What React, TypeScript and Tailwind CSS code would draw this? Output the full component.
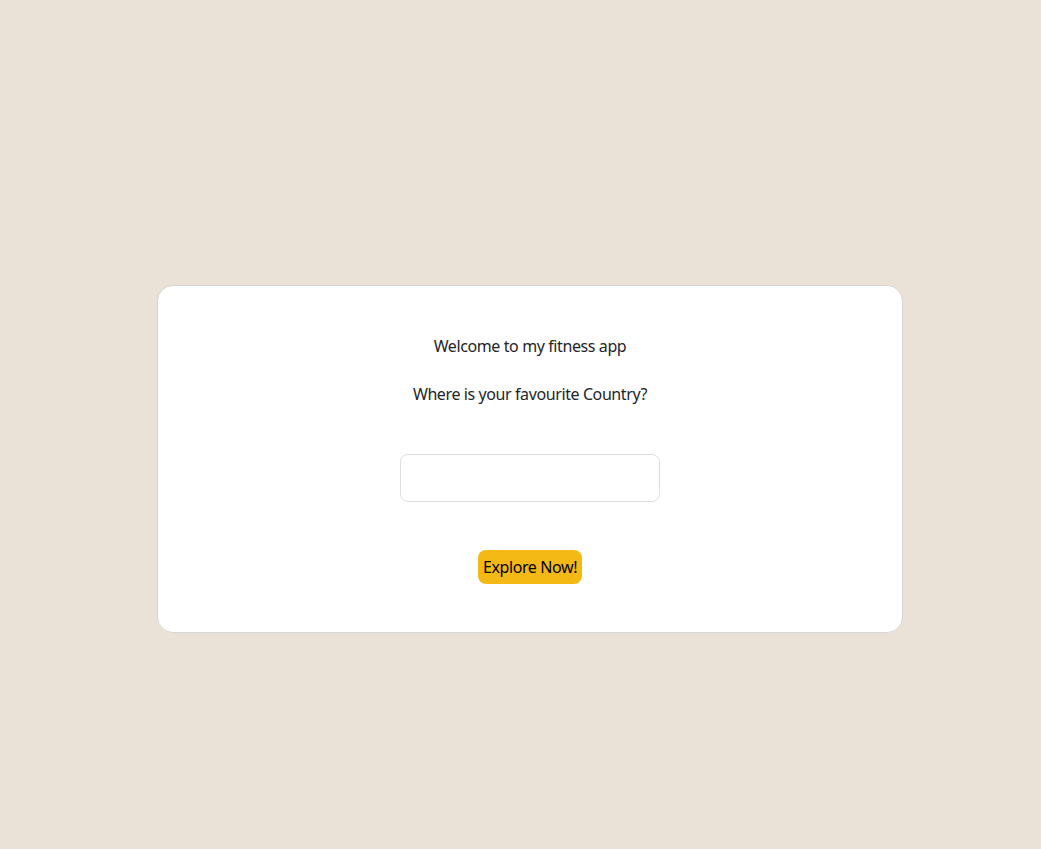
import React from "react"

export default function App() {
    const [country, setCountry] = React.useState("")

    return (
        <div className="min-h-[849px] w-full bg-[#eae2d7] pt-[285px] font-['Segoe_UI','Noto_Sans',sans-serif] tracking-[-0.4px] text-[#212529]">
            <div className="ml-[157px] flex w-[746px] flex-col items-center rounded-2xl border border-[#d6d6d6] bg-white py-12">
                <p className="text-base leading-6">Welcome to my fitness app</p>
                <p className="mt-6 text-base leading-6">Where is your favourite Country?</p>
                <input
                    type="text"
                    value={country}
                    onChange={(e) => setCountry(e.target.value)}
                    className="mt-12 h-12 w-[260px] rounded-lg border border-[#dedede] px-3 outline-none"
                />
                <button
                    type="button"
                    className="mt-12 h-[34px] rounded-lg bg-[#f5b915] px-[5px] text-base tracking-[-0.4px] text-black"
                >
                    Explore Now!
                </button>
            </div>
        </div>
    )
}
